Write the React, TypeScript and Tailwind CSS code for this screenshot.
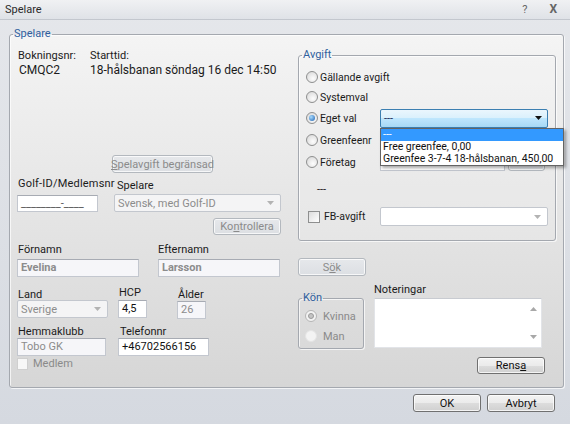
import type { ReactNode } from "react"

const FONT = "font-['Roboto','Noto_Sans',sans-serif]"

function Arrow({ color = "#b3b3b3" }: { color?: string }) {
  return (
    <svg width="7" height="4" viewBox="0 0 7 4" className="shrink-0">
      <path d="M0 0h7L3.5 4z" fill={color} />
    </svg>
  )
}

function GroupBox({ title, className, children }: { title: string; className?: string; children?: ReactNode }) {
  return (
    <fieldset
      className={`shrink-0 rounded-[3px] border border-[#a4a8af] shadow-[inset_1px_1px_0_rgba(255,255,255,0.7),1px_1px_0_rgba(255,255,255,0.7)] ${className ?? ""}`}
    >
      <legend className="ml-[3px] px-[1px] text-[11px] leading-[14px] text-[#2f5f9e]">{title}</legend>
      {children}
    </fieldset>
  )
}

function TextBox({ value, className, disabled, bold }: { value?: string; className?: string; disabled?: boolean; bold?: boolean }) {
  return (
    <div
      className={`shrink-0 overflow-hidden whitespace-nowrap border border-[#c3c7cf] border-t-[#a7abb3] px-[3px] leading-[15px] ${
        disabled ? "bg-[#f6f6f9] text-[#8c8c8c]" : "bg-white text-[#111]"
      } ${bold ? "font-bold" : ""} ${className ?? ""}`}
    >
      {value}
    </div>
  )
}

function Combo({ value, className }: { value?: string; className?: string }) {
  return (
    <div
      className={`flex shrink-0 items-center justify-between rounded-[2px] border border-[#c3c7ce] bg-[#f4f4f5] pl-[3px] pr-[6px] text-[#8c8c8c] ${className ?? ""}`}
    >
      <span className="whitespace-nowrap">{value}</span>
      <Arrow />
    </div>
  )
}

function Btn({ children, className, disabled }: { children: ReactNode; className?: string; disabled?: boolean }) {
  return (
    <button
      type="button"
      className={`flex shrink-0 items-center justify-center whitespace-nowrap rounded-[3px] border leading-[13px] ${
        disabled
          ? "border-[#b3b8be] bg-[linear-gradient(#e6e8eb,#dcdfe3)] text-[#8b8b8b]"
          : "border-[#707070] bg-[linear-gradient(#f3f3f3_0%,#ebebeb_50%,#dddddd_50%,#d0d0d0_100%)] text-[#111]"
      } shadow-[inset_0_0_0_1px_rgba(255,255,255,0.75)] ${className ?? ""}`}
    >
      {children}
    </button>
  )
}

function Radio({ checked, disabled }: { checked?: boolean; disabled?: boolean }) {
  if (disabled) {
    return (
      <div
        className={`flex h-[12px] w-[12px] shrink-0 items-center justify-center rounded-full border ${
          checked ? "border-[#b5b5b5] bg-[#f2f2f2]" : "border-[#e4e4e4] bg-[#f3f3f3]"
        }`}
      >
        {checked && <div className="h-[6px] w-[6px] rounded-full border border-[#9a9a9a] bg-[#c4c4c4]" />}
      </div>
    )
  }
  return (
    <div className="flex h-[12px] w-[12px] shrink-0 items-center justify-center rounded-full border border-[#8e8f8f] bg-[radial-gradient(circle_at_60%_65%,#fdfdfd,#d4d4d4)]">
      {checked && <div className="h-[6px] w-[6px] rounded-full bg-[radial-gradient(circle_at_35%_35%,#a8dcff,#1d5fae)]" />}
    </div>
  )
}

function RadioRow({ label, checked, className, children }: { label: string; checked?: boolean; className?: string; children?: ReactNode }) {
  return (
    <div className={`flex items-center ${className ?? ""}`}>
      <Radio checked={checked} />
      <span className={`ml-[2px] shrink-0 whitespace-nowrap text-[10.5px] ${children ? "w-[60px]" : ""}`}>{label}</span>
      {children}
    </div>
  )
}

function Label({ children, className }: { children: ReactNode; className?: string }) {
  return <span className={`h-[13px] shrink-0 whitespace-nowrap leading-[13px] ${className ?? ""}`}>{children}</span>
}

function LeftColumn() {
  return (
    <div className="ml-[7px] flex w-[264px] shrink-0 flex-col">
      <div className="mt-[8px] flex">
        <Label className="w-[73px] pl-[1px]">Bokningsnr:</Label>
        <Label>Starttid:</Label>
      </div>
      <div className="flex text-[12px] leading-[16px]">
        <span className="w-[73px] shrink-0 pl-[2px]">CMQC2</span>
        <span className="whitespace-nowrap">18-hålsbanan söndag 16 dec 14:50</span>
      </div>

      <Btn disabled className="ml-[95px] mt-[77px] h-[18px] w-[101px]">
        <u>S</u>pelavgift begränsad
      </Btn>

      <div className="mt-[4px] flex">
        <Label className="w-[100px] pl-[1px] tracking-[0.2px]">Golf-ID/Medlemsnr</Label>
        <Label className="mt-[2px]">Spelare</Label>
      </div>
      <div className="mt-[2px] flex items-start">
        <TextBox className="mt-[1px] h-[17px] w-[81px] !text-[#555]" value="________-____" />
        <Combo className="ml-[16px] h-[18px] w-[167px]" value="Svensk, med Golf-ID" />
      </div>
      <Btn disabled className="ml-[196px] mt-[6px] h-[17px] w-[68px]">
        Ko<u>n</u>trollera
      </Btn>

      <div className="mt-[8px] flex">
        <div className="flex w-[141px] shrink-0 flex-col">
          <Label className="pl-[1px]">Förnamn</Label>
          <TextBox disabled bold className="mt-[3px] h-[18px] w-[122px]" value="Evelina" />
        </div>
        <div className="flex flex-col">
          <Label>Efternamn</Label>
          <TextBox disabled bold className="mt-[3px] h-[18px] w-[122px]" value="Larsson" />
        </div>
      </div>

      <div className="mt-[11px] flex items-start">
        <div className="flex w-[101px] shrink-0 flex-col">
          <Label className="pl-[1px]">Land</Label>
          <Combo className="mt-[-1px] h-[18px] w-[91px]" value="Sverige" />
        </div>
        <div className="mt-[-2px] flex w-[59px] shrink-0 flex-col">
          <Label className="pl-[1px]">HCP</Label>
          <TextBox className="mt-[1px] h-[18px] w-[29px]" value="4,5" />
        </div>
        <div className="flex flex-col">
          <Label className="pl-[1px]">Ålder</Label>
          <TextBox disabled className="h-[18px] w-[29px]" value="26" />
        </div>
      </div>

      <div className="mt-[6px] flex">
        <div className="flex w-[101px] shrink-0 flex-col">
          <Label className="pl-[1px]">Hemmaklubb</Label>
          <TextBox disabled className="h-[18px] w-[89px]" value="Tobo GK" />
        </div>
        <div className="flex flex-col">
          <Label className="pl-[2px]">Telefonnr</Label>
          <TextBox className="h-[18px] w-[91px]" value="+46702566156" />
        </div>
      </div>

      <div className="mt-[1px] flex items-center">
        <div className="h-[12px] w-[11px] border border-[#cfcfcf] bg-[#f7f7f7]" />
        <span className="ml-[5px] text-[#8a8a8a]">Medlem</span>
      </div>
    </div>
  )
}

function AvgiftGroup() {
  return (
    <GroupBox title="Avgift" className="mt-[7px] h-[193px] w-[258px] bg-white/10">
      <div className="flex flex-col pl-[7px]">
        <RadioRow className="mt-[5px] h-[20px]" label="Gällande avgift" />
        <RadioRow className="h-[20px]" label="Systemval" />
        <RadioRow className="h-[22px]" label="Eget val" checked>
          <div className="relative">
            <div className="flex h-[19px] w-[168px] items-center justify-between rounded-[2px] border border-[#3c7fb1] bg-[linear-gradient(#eaf6fd_0%,#d9f0fc_50%,#bee6fd_50%,#a7d9f5_100%)] pl-[3px] pr-[5px] text-[#1c2f55]">
              <span>---</span>
              <Arrow color="#111" />
            </div>
            <div className="absolute left-0 top-[19px] z-10 w-[184px] border border-[#646464] bg-white text-[10.5px] shadow-[2px_2px_3px_rgba(0,0,0,0.35)]">
              <div className="h-[12px] bg-[#3399ff] pl-[2px] leading-[11px] text-white">---</div>
              <div className="h-[12px] whitespace-nowrap pl-[2px] leading-[12px] text-[#111]">Free greenfee, 0,00</div>
              <div className="h-[12px] whitespace-nowrap pl-[2px] leading-[12px] text-[#111]">Greenfee 3-7-4 18-hålsbanan, 450,00</div>
            </div>
          </div>
        </RadioRow>
        <RadioRow className="h-[22px]" label="Greenfeenr">
          <TextBox className="h-[18px] w-[125px]" />
        </RadioRow>
        <RadioRow className="h-[22px]" label="Företag">
          <TextBox className="h-[18px] w-[125px]" />
          <Btn disabled className="ml-[3px] h-[18px] w-[37px]">
            {" "}
          </Btn>
        </RadioRow>
        <div className="mt-[6px] flex h-[20px] items-center pl-[11px]">---</div>
        <div className="mt-[8px] flex h-[19px] items-center">
          <div className="ml-[2px] h-[12px] w-[12px] shrink-0 border border-[#8e8f8f] bg-[linear-gradient(135deg,#dcdcdc,#ffffff)]" />
          <span className="ml-[4px] w-[56px] shrink-0 text-[10.5px]">FB-avgift</span>
          <Combo className="h-[19px] w-[168px] !bg-white" />
        </div>
      </div>
    </GroupBox>
  )
}

function RightColumn() {
  return (
    <div className="ml-[17px] flex w-[258px] shrink-0 flex-col">
      <AvgiftGroup />
      <Btn disabled className="mt-[17px] h-[18px] w-[68px]">
        S<u>ö</u>k
      </Btn>
      <div className="mt-[7px] flex items-start">
        <GroupBox title="Kön" className="mt-[8px] h-[58px] w-[66px]">
          <div className="flex flex-col pl-[6px]">
            <div className="mt-[1px] flex h-[20px] items-center">
              <Radio checked disabled />
              <span className="ml-[6px] text-[#8a8a8a]">Kvinna</span>
            </div>
            <div className="flex h-[20px] items-center">
              <Radio disabled />
              <span className="ml-[6px] text-[#8a8a8a]">Man</span>
            </div>
          </div>
        </GroupBox>
        <div className="ml-[10px] flex flex-col">
          <Label>Noteringar</Label>
          <div className="mt-[2px] flex h-[50px] w-[168px] justify-end border border-[#e2e4e8] border-t-[#c8cbd1] bg-white pr-[4px]">
            <div className="flex flex-col justify-between py-[8px]">
              <svg width="7" height="4" viewBox="0 0 7 4">
                <path d="M0 4h7L3.5 0z" fill="#a8a8a8" />
              </svg>
              <Arrow color="#a8a8a8" />
            </div>
          </div>
        </div>
      </div>
      <Btn className="ml-[179px] mt-[8px] h-[17px] w-[68px]">
        Rens<u>a</u>
      </Btn>
    </div>
  )
}

export default function App() {
  return (
    <div className={`h-[424px] w-[570px] overflow-hidden bg-[linear-gradient(#e5e7eb,#d5d9e0)] text-[11px] leading-[13px] text-[#1b1b1b] ${FONT}`}>
      <div className="flex h-[20px] items-center justify-between border-b border-[#c3c7ce] bg-[linear-gradient(#f0f1f3,#dfe2e7)] pl-[5px] pr-[13px]">
        <span className="text-[11px] text-[#2a2a2a]">Spelare</span>
        <div className="flex items-center gap-[22px] text-[#666]">
          <span className="text-[11px]">?</span>
          <span className="text-[12px] font-bold">X</span>
        </div>
      </div>
      <div className="pl-[9px] pt-[7px]">
        <GroupBox title="Spelare" className="h-[361px] w-[555px] bg-[linear-gradient(#f4f4f4,#d6d6d6)]">
          <div className="flex">
            <LeftColumn />
            <RightColumn />
          </div>
        </GroupBox>
      </div>
      <div className="mt-[6px] flex justify-end gap-[6px] pr-[15px]">
        <Btn className="h-[18px] w-[68px]">OK</Btn>
        <Btn className="h-[18px] w-[68px]">Avbryt</Btn>
      </div>
    </div>
  )
}
